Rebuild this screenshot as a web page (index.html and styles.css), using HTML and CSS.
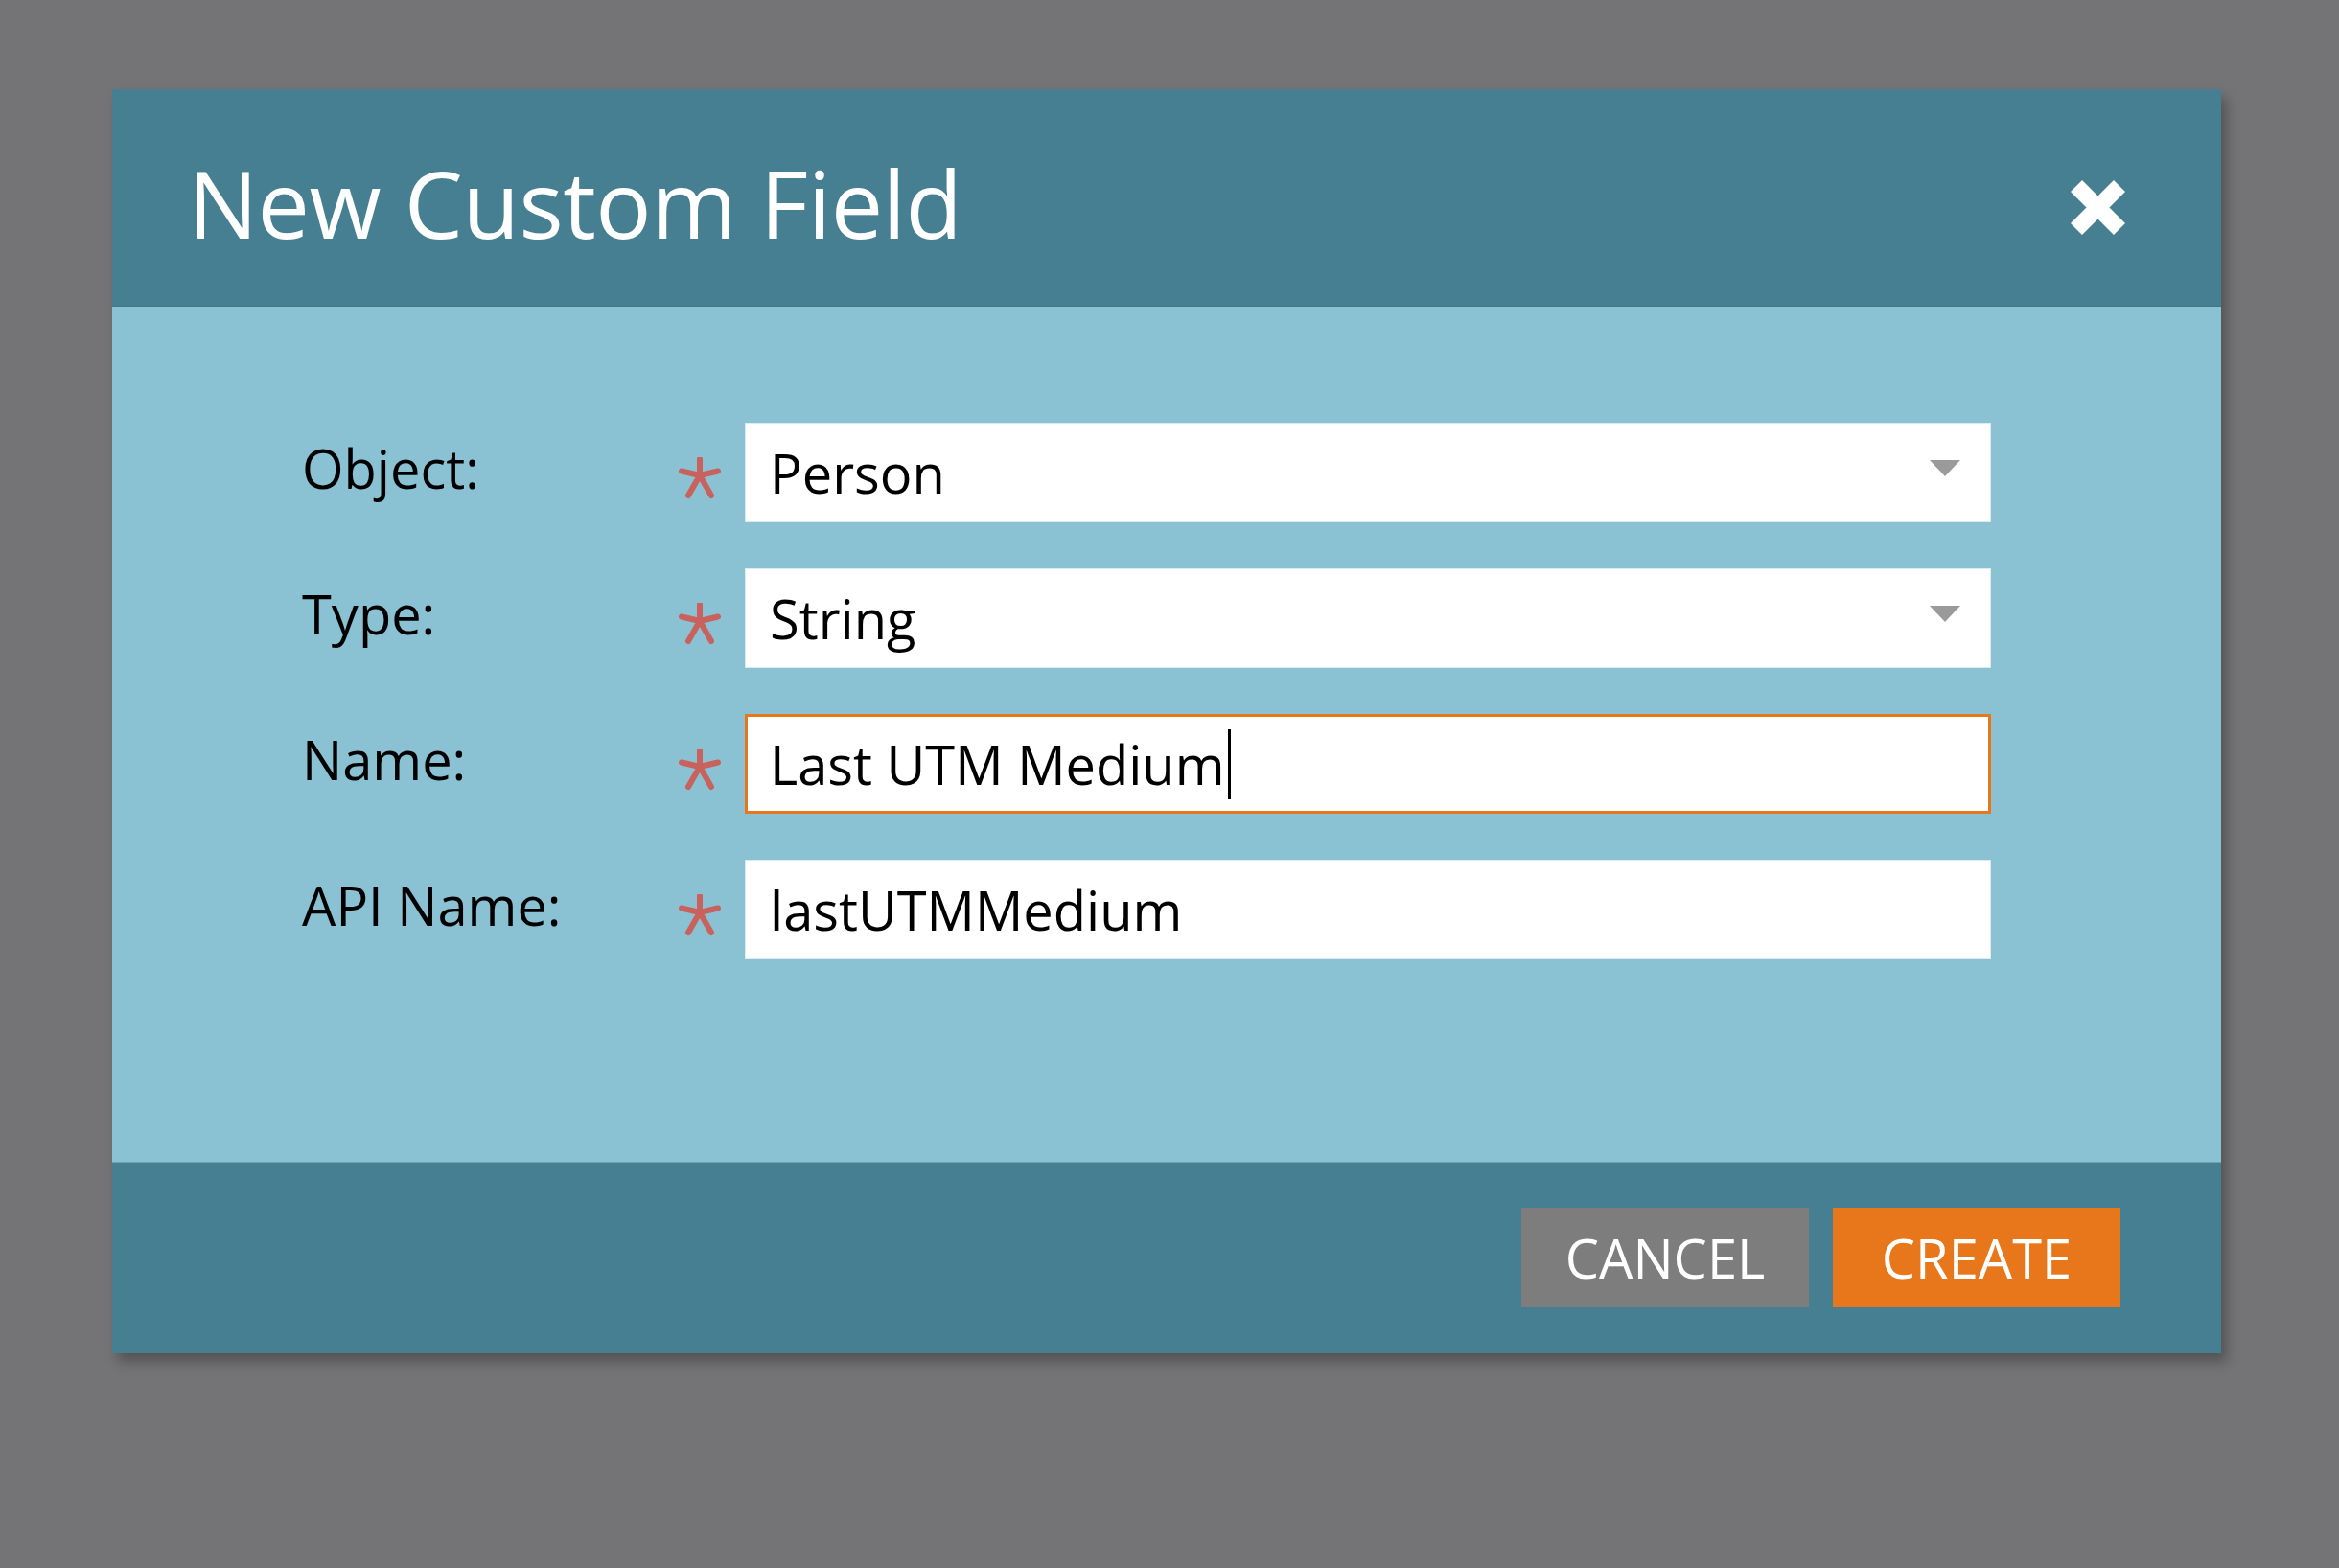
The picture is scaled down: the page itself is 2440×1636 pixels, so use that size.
FILE: index.html
```html
<!DOCTYPE html>
<html lang="en">
<head>
<meta charset="utf-8">
<title>New Custom Field</title>
<link rel="stylesheet" href="styles.css">
</head>
<body>
<div class="dialog">
  <div class="dialog-header">
    <h1 class="dialog-title">New Custom Field</h1>
    <button class="close-btn" aria-label="Close">
      <svg width="57" height="59" viewBox="0 0 57 59"><path d="M6 7 L51 52 M51 7 L6 52" stroke="#ffffff" stroke-width="17" fill="none"/></svg>
    </button>
  </div>
  <div class="dialog-body">
    <div class="form-label">Object:</div>
    <div class="req"><svg width="46" height="44" viewBox="0 0 46 44"><path d="M23 19 L23 2 M23 19 L4 14.5 M23 19 L42 14.5 M23 19 L11 40 M23 19 L35 40" stroke="#c9615c" stroke-width="6" stroke-linecap="round" fill="none"/></svg></div>
    <div class="field select"><span class="field-text">Person</span><span class="arrow"></span></div>

    <div class="form-label">Type:</div>
    <div class="req"><svg width="46" height="44" viewBox="0 0 46 44"><path d="M23 19 L23 2 M23 19 L4 14.5 M23 19 L42 14.5 M23 19 L11 40 M23 19 L35 40" stroke="#c9615c" stroke-width="6" stroke-linecap="round" fill="none"/></svg></div>
    <div class="field select"><span class="field-text">String</span><span class="arrow"></span></div>

    <div class="form-label">Name:</div>
    <div class="req"><svg width="46" height="44" viewBox="0 0 46 44"><path d="M23 19 L23 2 M23 19 L4 14.5 M23 19 L42 14.5 M23 19 L11 40 M23 19 L35 40" stroke="#c9615c" stroke-width="6" stroke-linecap="round" fill="none"/></svg></div>
    <div class="field focused"><span class="field-text">Last UTM Medium</span><span class="caret"></span></div>

    <div class="form-label">API Name:</div>
    <div class="req"><svg width="46" height="44" viewBox="0 0 46 44"><path d="M23 19 L23 2 M23 19 L4 14.5 M23 19 L42 14.5 M23 19 L11 40 M23 19 L35 40" stroke="#c9615c" stroke-width="6" stroke-linecap="round" fill="none"/></svg></div>
    <div class="field"><span class="field-text">lastUTMMedium</span></div>
  </div>
  <div class="dialog-footer">
    <button class="btn btn-cancel">CANCEL</button>
    <button class="btn btn-create">CREATE</button>
  </div>
</div>
</body>
</html>
```
FILE: styles.css
```css
html, body {
  margin: 0;
  padding: 0;
  background: #747476;
  font-family: "Open Sans", "Noto Sans", sans-serif;
}
body {
  width: 2440px;
  height: 1636px;
  overflow: hidden;
}
.dialog {
  margin: 93px 0 0 117px;
  width: 2200px;
  box-shadow: 6px 9px 12px rgba(0, 0, 0, 0.28);
}
.dialog-header {
  height: 227px;
  box-sizing: border-box;
  background: #467f92;
  border-bottom: 1px solid #40778a;
  display: flex;
  justify-content: space-between;
  align-items: flex-start;
  padding: 69px 100px 0 79px;
}
.dialog-title {
  margin: 0;
  font-weight: 400;
  font-size: 97px;
  line-height: 98px;
  color: #ffffff;
  letter-spacing: -0.5px;
}
.close-btn {
  margin-top: 25px;
  padding: 0;
  border: 0;
  background: transparent;
  width: 57px;
  height: 59px;
  display: block;
}
.close-btn svg { display: block; }
.dialog-body {
  height: 892px;
  box-sizing: border-box;
  background: #8ac1d3;
  padding: 121px 0 0 198px;
  display: grid;
  grid-template-columns: 390px 72px 1300px;
  grid-auto-rows: 104px;
  row-gap: 48px;
  align-content: start;
}
.form-label {
  font-size: 56px;
  line-height: 94px;
  color: #000000;
}
.req {
  padding: 36px 0 0 2px;
}
.req svg { display: block; }
.field {
  height: 104px;
  box-sizing: border-box;
  background: #ffffff;
  border: 1px solid #d9ecf2;
  display: flex;
  align-items: center;
  padding: 0 31px 0 25px;
}
.field.select {
  justify-content: space-between;
}
.field.focused {
  border: 3px solid #e8761b;
  padding-left: 23px;
}
.field-text {
  font-size: 56px;
  line-height: 76px;
  color: #000000;
  white-space: nowrap;
}
.arrow {
  width: 0;
  height: 0;
  border-left: 16px solid transparent;
  border-right: 16px solid transparent;
  border-top: 17px solid #9a9a9a;
  margin-bottom: 9px;
}
.caret {
  width: 3px;
  height: 73px;
  background: #000000;
  margin-left: 3px;
}
.dialog-footer {
  height: 200px;
  box-sizing: border-box;
  background: #467f92;
  border-top: 1px solid #6fa3b4;
  display: flex;
  justify-content: flex-end;
  align-items: flex-start;
  gap: 25px;
  padding: 47px 105px 0 0;
}
.btn {
  width: 300px;
  height: 104px;
  border: 0;
  padding: 0;
  font-family: "Open Sans", "Noto Sans", sans-serif;
  font-size: 56px;
  line-height: 104px;
  color: #ffffff;
  text-align: center;
}
.btn-cancel { background: #7d7d7d; }
.btn-create { background: #e8761a; }
```
